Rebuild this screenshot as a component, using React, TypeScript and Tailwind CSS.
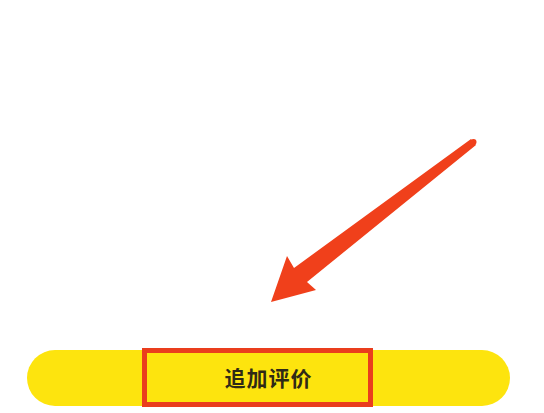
import React from "react";

export default function App() {
  return (
    <div
      className="relative w-[544px] h-[413px] bg-white flex flex-col justify-end pl-[27px] pr-[34px] pb-[7px]"
      style={{ fontFamily: '"Noto Sans CJK SC", "Noto Sans", sans-serif' }}
    >
      {/* annotation arrow */}
      <svg
        className="absolute left-0 top-0 pointer-events-none"
        width="544"
        height="413"
        viewBox="0 0 544 413"
      >
        <polygon
          points="471,139 294,268 287,256 271,302 316,290 307,282 476,145"
          fill="#f0401b"
          strokeLinejoin="round"
        />
        <circle cx="473.5" cy="142" r="3" fill="#f0401b" />
      </svg>

      <div className="relative h-[56px] rounded-full bg-[#fde40e] flex items-center justify-center">
        <span className="text-[21px] font-bold text-[#2f2a16] tracking-[1px]">追加评价</span>
        {/* highlight box */}
        <div className="absolute left-[115px] top-[-2px] w-[231px] h-[59px] border-[5px] border-[#ea3d1d]" />
      </div>
    </div>
  );
}
